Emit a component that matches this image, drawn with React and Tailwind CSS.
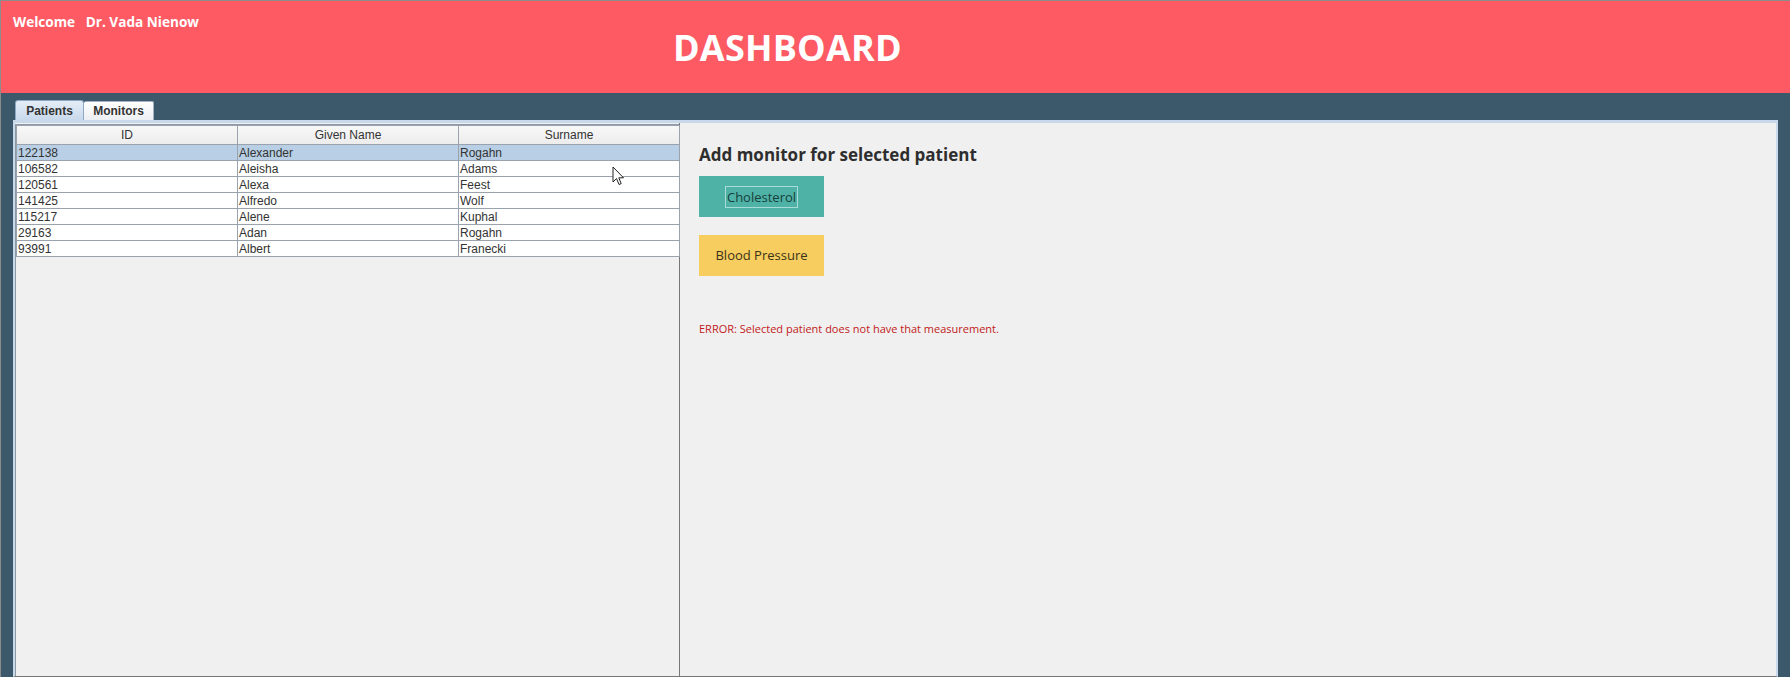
import React from "react";

const patients = [
  { id: "122138", given: "Alexander", surname: "Rogahn" },
  { id: "106582", given: "Aleisha", surname: "Adams" },
  { id: "120561", given: "Alexa", surname: "Feest" },
  { id: "141425", given: "Alfredo", surname: "Wolf" },
  { id: "115217", given: "Alene", surname: "Kuphal" },
  { id: "29163", given: "Adan", surname: "Rogahn" },
  { id: "93991", given: "Albert", surname: "Franecki" },
];

const uiFont = { fontFamily: '"Open Sans", "Noto Sans", sans-serif' };
const tableFont = { fontFamily: '"Liberation Sans", Arial, sans-serif' };

const PatientTable = ({ selected = 0 }) => (
  <table className="w-[663px] border-collapse table-fixed text-[12px] text-[#333]" style={tableFont}>
    <thead>
      <tr className="h-[18px] bg-gradient-to-b from-[#f8f8f8] to-[#ececec]">
        <th className="w-[221px] border border-[#9aa3ad] font-normal text-center">ID</th>
        <th className="w-[221px] border border-[#9aa3ad] font-normal text-center">Given Name</th>
        <th className="w-[221px] border border-[#9aa3ad] font-normal text-center">Surname</th>
      </tr>
    </thead>
    <tbody>
      {patients.map((p, i) => (
        <tr key={p.id} className={`h-[16px] ${i === selected ? "bg-[#b8cfe5]" : "bg-white"}`}>
          <td className="border border-[#9aa3ad] px-[1px] leading-[14px]">{p.id}</td>
          <td className="border border-[#9aa3ad] px-[1px] leading-[14px]">{p.given}</td>
          <td className="border border-[#9aa3ad] px-[1px] leading-[14px]">{p.surname}</td>
        </tr>
      ))}
    </tbody>
  </table>
);

const Cursor = () => (
  <svg width="13" height="20" viewBox="0 0 13 20" className="absolute left-[611px] top-[165px]">
    <path d="M1 1 L1 16 L4.5 12.5 L7 18.5 L9.2 17.6 L6.8 11.8 L11.5 11.8 Z" fill="#fff" stroke="#222" strokeWidth="1" strokeLinejoin="round" />
  </svg>
);

export default function App() {
  return (
    <div className="relative w-[1790px] h-[677px] flex flex-col overflow-hidden border-t border-l border-[#8b8b8b] bg-[#3c596b]">
      {/* Header */}
      <div className="h-[92px] shrink-0 bg-[#fe5a64] relative text-white" style={uiFont}>
        <div className="absolute left-[12px] top-[11px] text-[13.6px] font-bold whitespace-pre">Welcome   Dr. Vada Nienow</div>
        <div className="absolute left-[672px] top-[20px] text-[36px] font-bold tracking-[0.2px]">DASHBOARD</div>
      </div>

      {/* Body */}
      <div className="flex-1 flex flex-col pl-[12px] pr-[12px] pt-[7px]">
        {/* Tabs */}
        <div className="flex h-[20px] ml-[2px] items-end text-[12px] font-bold text-[#333]" style={tableFont}>
          <div className="h-[20px] w-[69px] flex items-center justify-center rounded-t-[3px] border border-b-0 border-[#8fa8c4] bg-gradient-to-b from-[#e4edf7] to-[#c8d9ec]">
            Patients
          </div>
          <div className="h-[19px] w-[70px] flex items-center justify-center rounded-t-[2px] border border-b-0 border-l-0 border-[#a3b3c4] bg-gradient-to-b from-[#ffffff] to-[#eceff3]">
            Monitors
          </div>
        </div>

        {/* Panel */}
        <div className="flex-1 flex border-t-[3px] border-l-[2px] border-r-[2px] border-[#c9d8ea] bg-[#f0f0f0] border-b border-b-[#777]">
          {/* Left: table */}
          <div className="w-[665px] shrink-0 pt-[1px] border-r border-[#777]">
            <div className="border-t border-l border-[#8e9aa6] h-full">
              <PatientTable selected={0} />
            </div>
          </div>

          {/* Right: actions */}
          <div className="flex-1 pl-[19px] pt-[21px]" style={uiFont}>
            <h2 className="text-[17px] font-bold text-[#2e2e2e] leading-[22px]">Add monitor for selected patient</h2>
            <button className="mt-[10px] w-[125px] h-[41px] bg-[#4fb2a7] flex items-center justify-center text-[13px] text-[#173f3b]">
              <span className="border border-[#a9dcd6] px-[1px] leading-[20px]">Cholesterol</span>
            </button>
            <button className="mt-[18px] w-[125px] h-[41px] bg-[#f7cd5f] flex items-center justify-center text-[13px] text-[#3a3218]">
              Blood Pressure
            </button>
            <p className="mt-[45px] text-[11px] text-[#c21a1a]">ERROR: Selected patient does not have that measurement.</p>
          </div>
        </div>
      </div>

      <Cursor />
    </div>
  );
}
